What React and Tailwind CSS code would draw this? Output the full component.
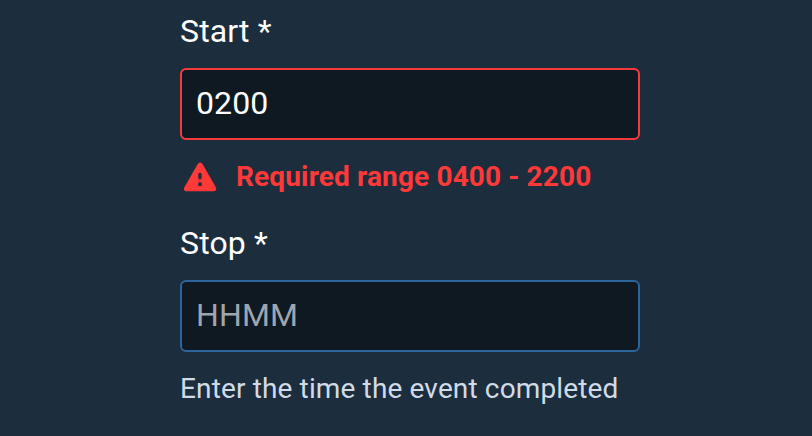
export default function App() {
  return (
    <main className="h-[436px] w-[812px] overflow-hidden bg-[#1c2d3e] pl-[180px] pt-[12px] font-['Roboto',sans-serif] tracking-[0.14px] text-white">
      <label className="block h-[56px] text-[32px] leading-[38px]">Start *</label>
      <div className="flex h-[72px] w-[460px] items-center rounded-[6px] border-2 border-[#f93a3c] bg-[#0f1922] px-[14px] pb-[2px] text-[32px] leading-[38px]">0200</div>
      <div className="flex h-[84px] items-start pt-[19px] text-[#ff3838]">
        <svg className="ml-[4px] mt-[3px] h-[30px] w-[33px] shrink-0" viewBox="0 0 33 30" fill="currentColor">
          <path fillRule="evenodd" d="M13.4 2.4Q16.1-1.3 18.8 2.4L31.8 25.2C33 27.4 31.8 29.2 29.5 29.2H2.5C.2 29.2-.8 27.4.4 25.2ZM16 10.8a1.7 1.7 0 0 0-1.7 1.7v3.3a1.7 1.7 0 0 0 3.4 0v-3.3a1.7 1.7 0 0 0-1.7-1.7ZM14.3 20.4V24h3.4v-3.6Z" />
        </svg>
        <p className="ml-[19px] text-[28px] font-bold leading-[36px]">Required range 0400 - 2200</p>
      </div>
      <label className="block h-[56px] text-[32px] leading-[38px]">Stop *</label>
      <div className="flex h-[72px] w-[460px] items-center rounded-[6px] border-2 border-[#2b659b] bg-[#0f1922] px-[14px] pb-[2px] text-[32px] leading-[38px] text-[#9fa5ae]">HHMM</div>
      <p className="pt-[20px] text-[28px] leading-[34px] text-[#d1dbe6]">Enter the time the event completed</p>
    </main>
  );
}
